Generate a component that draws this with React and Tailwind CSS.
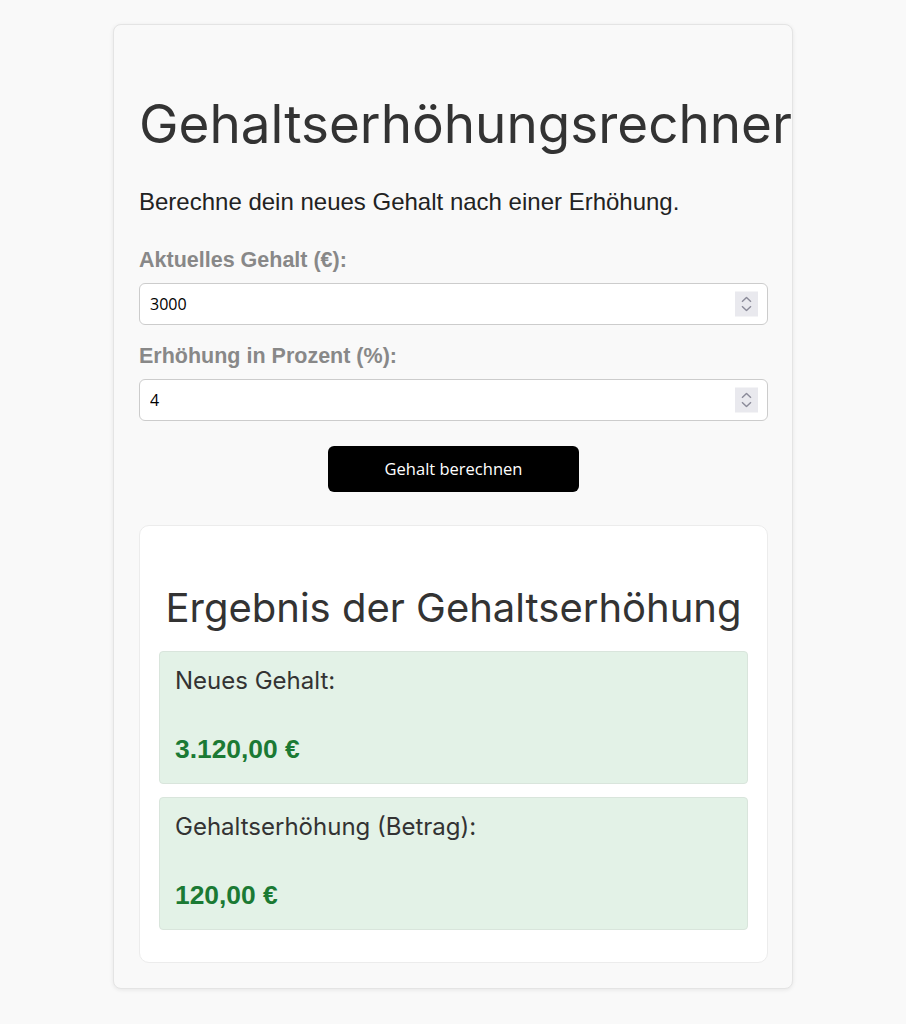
import { useState } from "react";

function Spinner() {
  return (
    <div className="absolute right-[10px] top-1/2 -translate-y-1/2 w-[23px] h-[25px] bg-[#e9e9ee] flex flex-col items-center justify-center gap-[3px]">
      <svg width="11" height="6" viewBox="0 0 11 6" fill="none">
        <path d="M1 5.2 L5.5 1 L10 5.2" stroke="#8b8b99" strokeWidth="1.4" />
      </svg>
      <svg width="11" height="6" viewBox="0 0 11 6" fill="none">
        <path d="M1 0.8 L5.5 5 L10 0.8" stroke="#8b8b99" strokeWidth="1.4" />
      </svg>
    </div>
  );
}

function Field({ label, value, onChange }) {
  return (
    <div className="flex flex-col">
      <label className="font-['Liberation_Sans',Arial,sans-serif] font-bold text-[21.5px] leading-[24px] text-[#888888] mb-[11px]">
        {label}
      </label>
      <div className="relative">
        <input
          type="text"
          value={value}
          onChange={(e) => onChange(e.target.value)}
          className="w-full h-[42px] bg-white border border-[#cccccc] rounded-[6px] pl-[10px] pr-[40px] text-[16px] text-black font-['Open_Sans',sans-serif] outline-none"
        />
        <Spinner />
      </div>
    </div>
  );
}

function ResultBox({ title, value }) {
  return (
    <div className="bg-[#e3f2e7] border border-[#d9e5dc] rounded-[4px] px-[15px] pt-[14px] pb-[18px]">
      <h3 className="font-['Inter',sans-serif] text-[24px] leading-[30px] text-[#333333]">{title}</h3>
      <p className="mt-[37px] font-['Liberation_Sans',Arial,sans-serif] font-bold text-[26.4px] leading-[32px] text-[#1b7a34]">
        {value}
      </p>
    </div>
  );
}

export default function App() {
  const [salary, setSalary] = useState("3000");
  const [percent, setPercent] = useState("4");

  const fmt = (n) =>
    n.toLocaleString("de-DE", { minimumFractionDigits: 2, maximumFractionDigits: 2 }) + " €";

  const base = Number(salary) || 0;
  const raise = (base * (Number(percent) || 0)) / 100;

  return (
    <div className="min-h-screen bg-[#f9f9f9] pt-[24px] pb-[34px]">
      <div className="w-[680px] mx-auto bg-[#f9f9f9] border border-[#e4e4e4] rounded-[8px] shadow-[0_1px_4px_rgba(0,0,0,0.08)] pl-[25px] pr-[24px] pt-[67px] pb-[25px]">
        <h1 className="font-['Inter',sans-serif] text-[53px] leading-[64px] text-[#333333] whitespace-nowrap">
          Gehaltserhöhungsrechner
        </h1>
        <p className="mt-[32px] font-['Liberation_Sans',Arial,sans-serif] text-[24px] leading-[28px] text-[#222222]">
          Berechne dein neues Gehalt nach einer Erhöhung.
        </p>

        <div className="mt-[32px] flex flex-col gap-[19px]">
          <Field label="Aktuelles Gehalt (€):" value={salary} onChange={setSalary} />
          <Field label="Erhöhung in Prozent (%):" value={percent} onChange={setPercent} />
        </div>

        <div className="mt-[25px] flex justify-center">
          <button className="w-[251px] h-[46px] bg-black text-white rounded-[6px] font-['Open_Sans',sans-serif] text-[16.5px]">
            Gehalt berechnen
          </button>
        </div>

        <div className="mt-[33px] bg-white border border-[#ececec] rounded-[10px] px-[19px] pt-[57px] pb-[32px]">
          <h2 className="text-center font-['Inter',sans-serif] text-[40px] leading-[50px] text-[#333333]">
            Ergebnis der Gehaltserhöhung
          </h2>
          <div className="mt-[18px] flex flex-col gap-[13px]">
            <ResultBox title="Neues Gehalt:" value={fmt(base + raise)} />
            <ResultBox title="Gehaltserhöhung (Betrag):" value={fmt(raise)} />
          </div>
        </div>
      </div>
    </div>
  );
}
